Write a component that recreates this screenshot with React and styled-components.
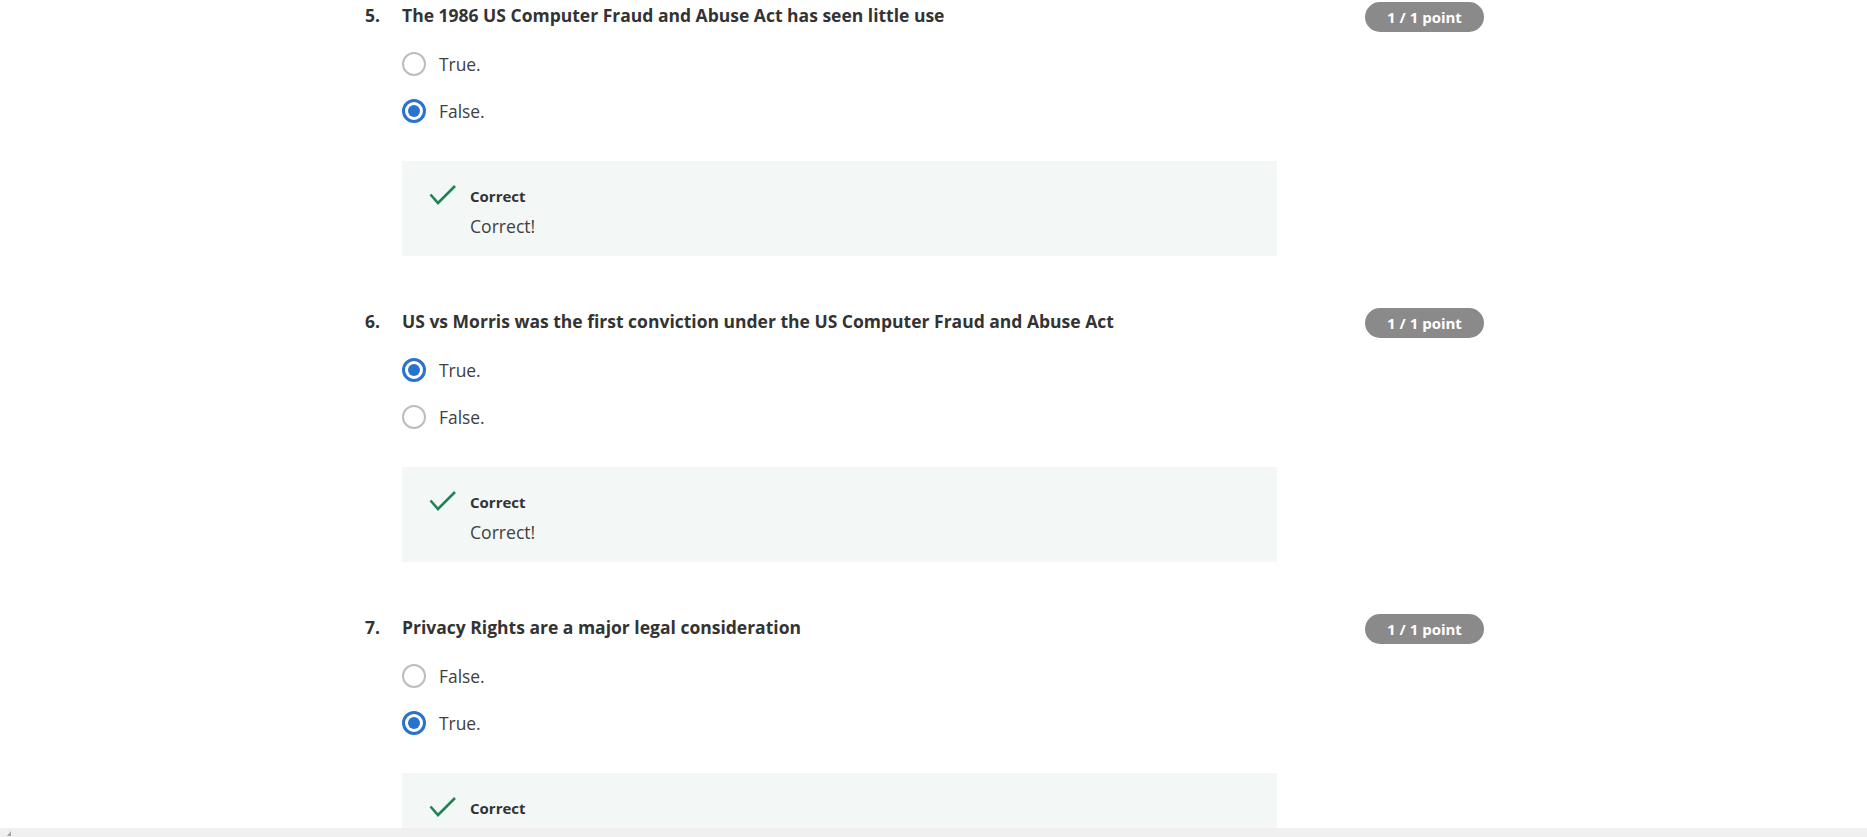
import React from 'react';
import styled, { createGlobalStyle } from 'styled-components';

const GlobalStyle = createGlobalStyle`
  html, body {
    margin: 0;
    padding: 0;
    background: #ffffff;
    font-family: "Open Sans", "Noto Sans", Arial, sans-serif;
    color: #333333;
    overflow: hidden;
  }
`;

const questions = [
    {
        num: 5,
        title: 'The 1986 US Computer Fraud and Abuse Act has seen little use',
        options: ['True.', 'False.'],
        picked: 1,
    },
    {
        num: 6,
        title: 'US vs Morris was the first conviction under the US Computer Fraud and Abuse Act',
        options: ['True.', 'False.'],
        picked: 0,
    },
    {
        num: 7,
        title: 'Privacy Rights are a major legal consideration',
        options: ['False.', 'True.'],
        picked: 1,
    },
];

const Viewport = styled.div`
    height: 837px;
    display: flex;
    flex-direction: column;
`;

const Scroller = styled.div`
    flex: 1;
    overflow: hidden;
`;

const Quiz = styled.div`
    width: 1119px;
    padding-left: 365px;
`;

const QuestionBlock = styled.div`
    display: flex;
    align-items: flex-start;
    margin-bottom: 50px;
`;

const Num = styled.div`
    width: 37px;
    flex: none;
    font-size: 17.5px;
    line-height: 24px;
    font-weight: 700;
    margin-top: 3px;
    color: #333;
`;

const Body = styled.div`
    flex: 1;
    display: flex;
    flex-direction: column;
`;

const Title = styled.h3`
    margin: 3px 0 0;
    font-size: 17.5px;
    line-height: 24px;
    font-weight: 700;
    color: #333;
`;

const OptionList = styled.div`
    margin-top: 13px;
    display: flex;
    flex-direction: column;
`;

const Option = styled.label`
    height: 47px;
    display: flex;
    align-items: center;
    gap: 13px;
    font-size: 17.4px;
    color: #404040;
`;

const Radio = styled.span`
    box-sizing: border-box;
    width: 24px;
    height: 24px;
    border-radius: 50%;
    border: ${p => (p.$on ? '3px solid #2a73cc' : '2px solid #bdbdbd')};
    display: flex;
    align-items: center;
    justify-content: center;
    flex: none;

    &::after {
        content: '';
        width: 12px;
        height: 12px;
        border-radius: 50%;
        background: #2a73cc;
        display: ${p => (p.$on ? 'block' : 'none')};
    }
`;

const Feedback = styled.div`
    margin-top: 27px;
    width: 875px;
    box-sizing: border-box;
    background: #f3f8f6;
    padding: 25px 0 18px 27px;
    display: flex;
    gap: 14px;
`;

const CheckIcon = styled.svg`
    width: 27px;
    height: 22px;
    flex: none;
    margin-top: -2px;
`;

const FeedbackText = styled.div`
    display: flex;
    flex-direction: column;
`;

const FeedbackLabel = styled.div`
    font-size: 15px;
    line-height: 20px;
    font-weight: 700;
    color: #333;
`;

const FeedbackMsg = styled.div`
    margin-top: 8px;
    font-size: 17.6px;
    line-height: 24px;
    color: #404040;
`;

const Badge = styled.div`
    flex: none;
    width: 119px;
    height: 30px;
    margin-top: 2px;
    border-radius: 15px;
    background: #8a8a8a;
    color: #fff;
    font-size: 15px;
    font-weight: 700;
    display: flex;
    align-items: center;
    justify-content: center;
`;

const ScrollBar = styled.div`
    height: 9px;
    flex: none;
    background: #f0f0f0;
    display: flex;
    align-items: flex-end;
    padding-left: 7px;
`;

const ScrollArrow = styled.span`
    width: 0;
    height: 0;
    border-bottom: 5px solid #a3a3a3;
    border-left: 4px solid transparent;
    margin-bottom: 1px;
`;

const Question = ({ q }) => (
    <QuestionBlock>
        <Num>{q.num}.</Num>
        <Body>
            <Title>{q.title}</Title>
            <OptionList>
                {q.options.map((opt, i) => (
                    <Option key={opt}>
                        <Radio $on={i === q.picked} />
                        {opt}
                    </Option>
                ))}
            </OptionList>
            <Feedback>
                <CheckIcon viewBox="0 0 27 22">
                    <polyline points="1.5,10.5 9,19 26,2" fill="none" stroke="#1f8354" strokeWidth="2.6" />
                </CheckIcon>
                <FeedbackText>
                    <FeedbackLabel>Correct</FeedbackLabel>
                    <FeedbackMsg>Correct!</FeedbackMsg>
                </FeedbackText>
            </Feedback>
        </Body>
        <Badge>1 / 1 point</Badge>
    </QuestionBlock>
);

const App = () => (
    <Viewport>
        <GlobalStyle />
        <Scroller>
            <Quiz>
                {questions.map(q => (
                    <Question key={q.num} q={q} />
                ))}
            </Quiz>
        </Scroller>
        <ScrollBar>
            <ScrollArrow />
        </ScrollBar>
    </Viewport>
);

export default App;
